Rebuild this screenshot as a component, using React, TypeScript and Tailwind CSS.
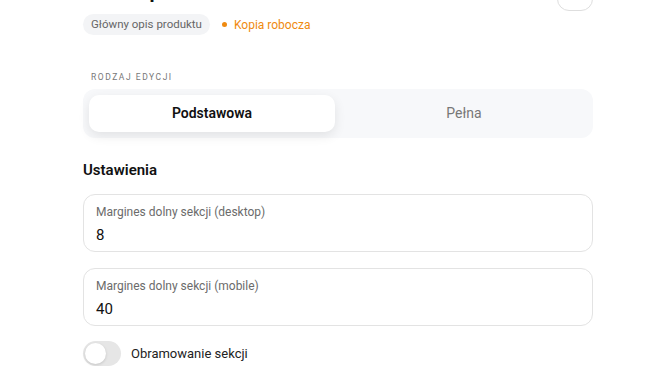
import { useState } from "react";

function Field({ label, value }: { label: string; value: string }) {
  return (
    <div className="rounded-xl border border-[#e3e3e3] bg-white px-3 pt-[9px] pb-[6px]">
      <div className="text-[12px] leading-[16px] text-[#6b6b6b]">{label}</div>
      <div className="mt-[5px] text-[15px] leading-[20px] text-[#111]">{value}</div>
    </div>
  );
}

export default function App() {
  const [mode, setMode] = useState<"basic" | "full">("basic");
  const [border, setBorder] = useState(false);

  return (
    <div className="min-h-[373px] bg-white font-['Roboto',sans-serif] text-[#111]">
      <div className="ml-[83px] w-[510px]">
        <div className="-mt-[22px] flex items-start justify-between">
          <h1 className="text-[20px] font-bold leading-[26px]">Treść opisu</h1>
          <button className="-mt-[3px] -mb-[7px] h-[36px] w-[36px] rounded-xl border border-[#dedede] bg-white" />
        </div>

        <div className="mt-[10px] flex items-center gap-3">
          <span className="rounded-full bg-[#f3f4f6] px-2 py-[3px] text-[11.5px] leading-[15px] text-[#666]">
            Główny opis produktu
          </span>
          <span className="flex items-center gap-[7px] text-[12px] text-[#ef8a10]">
            <span className="h-[5px] w-[5px] rounded-full bg-[#ef8a10]" />
            Kopia robocza
          </span>
        </div>

        <div className="mt-[36px] pl-2 text-[8.5px] leading-[12px] tracking-[0.18em] text-[#777]">
          RODZAJ EDYCJI
        </div>

        <div className="mt-[6px] grid grid-cols-2 gap-1.5 rounded-xl bg-[#f7f8fa] p-1.5">
          <button
            onClick={() => setMode("basic")}
            className={
              mode === "basic"
                ? "h-[37px] rounded-[10px] bg-white text-[14px] font-semibold text-[#111] shadow-[0_4px_12px_rgba(0,0,0,0.09)]"
                : "h-[37px] rounded-[10px] text-[14px] text-[#777]"
            }
          >
            Podstawowa
          </button>
          <button
            onClick={() => setMode("full")}
            className={
              mode === "full"
                ? "h-[37px] rounded-[10px] bg-white text-[14px] font-semibold text-[#111] shadow-[0_4px_12px_rgba(0,0,0,0.09)]"
                : "h-[37px] rounded-[10px] text-[14px] text-[#777]"
            }
          >
            Pełna
          </button>
        </div>

        <h2 className="mt-[22px] text-[15px] font-semibold leading-[20px]">Ustawienia</h2>

        <div className="mt-[14px] flex flex-col gap-[16px]">
          <Field label="Margines dolny sekcji (desktop)" value="8" />
          <Field label="Margines dolny sekcji (mobile)" value="40" />
        </div>

        <label className="mt-[15px] flex items-center gap-[10px]">
          <button
            onClick={() => setBorder(!border)}
            className={
              border
                ? "flex h-[25px] w-[38px] items-center justify-end rounded-full bg-[#ef8a10] p-[2px]"
                : "flex h-[25px] w-[38px] items-center rounded-full bg-[#e6e6e6] p-[2px]"
            }
          >
            <span className="h-[21px] w-[21px] rounded-full bg-white shadow-[0_1px_3px_rgba(0,0,0,0.15)]" />
          </button>
          <span className="text-[13px] text-[#222]">Obramowanie sekcji</span>
        </label>
      </div>
    </div>
  );
}
